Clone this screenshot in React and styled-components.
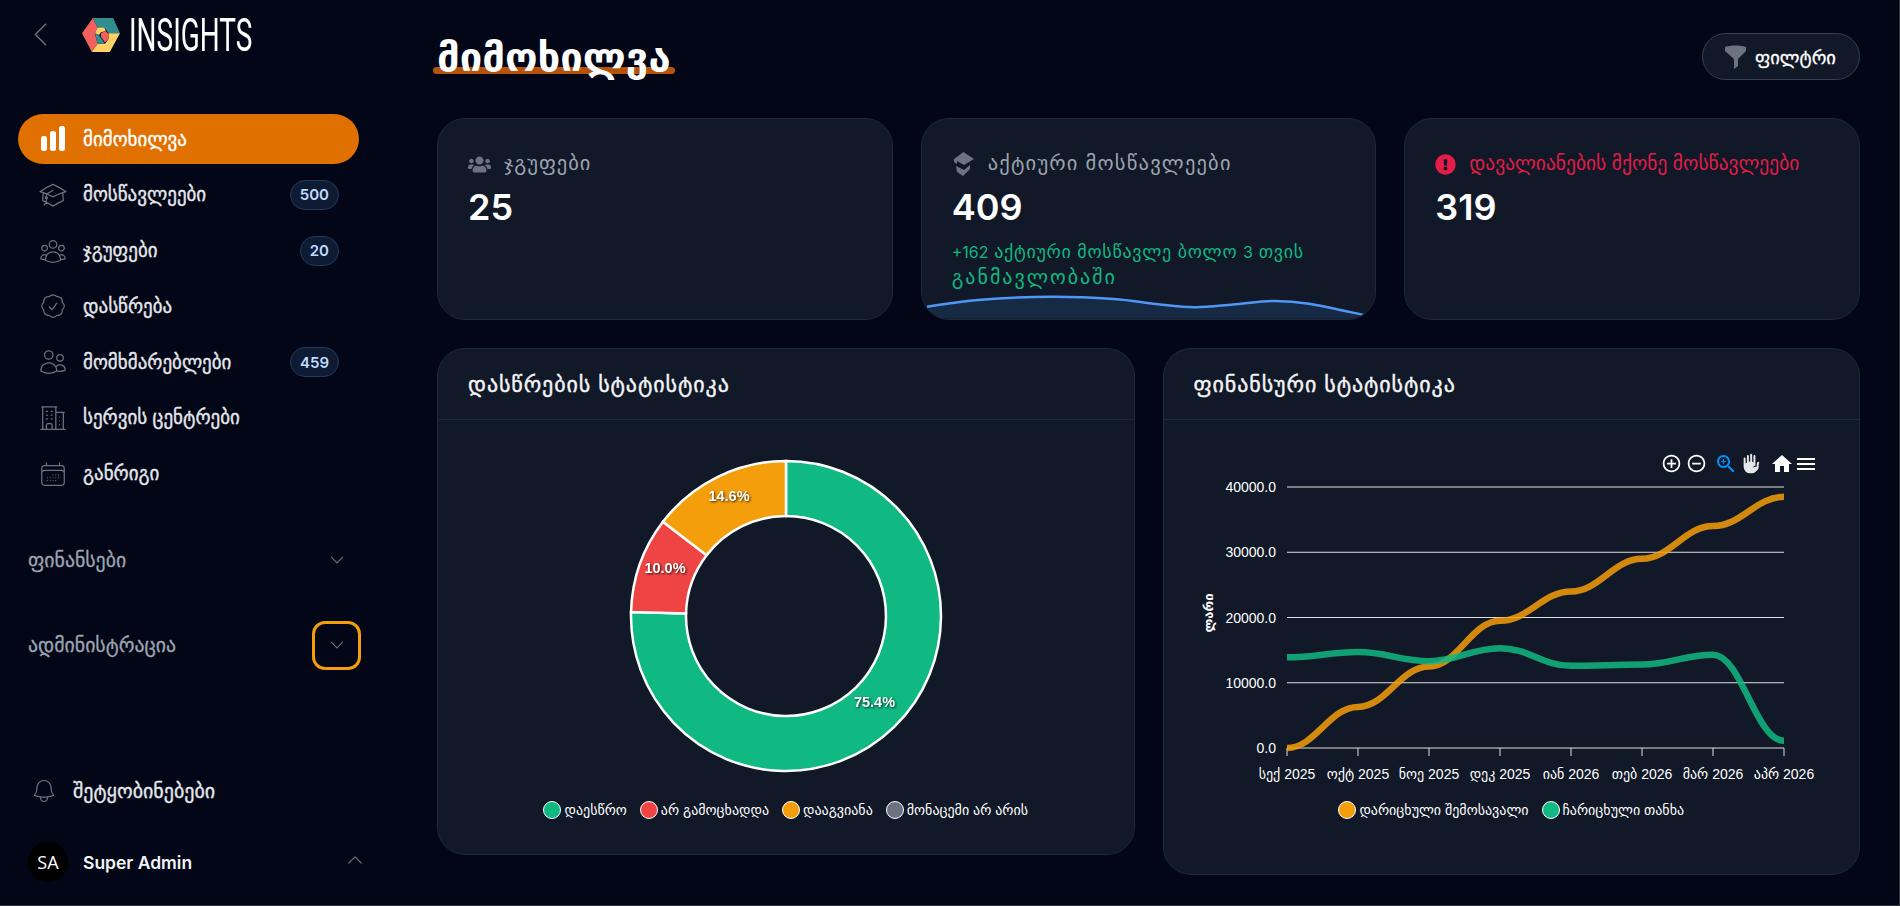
import React from 'react';
import styled, { createGlobalStyle } from 'styled-components';
import {
  HiOutlineAcademicCap, HiOutlineUserGroup, HiOutlineCheckBadge, HiOutlineUsers,
  HiOutlineBuildingOffice2, HiOutlineCalendarDays, HiOutlineBell, HiOutlineChevronDown,
  HiOutlineChevronUp, HiOutlineChevronLeft, HiHandRaised,
} from 'react-icons/hi2';
import { FaUsers, FaExclamationCircle } from 'react-icons/fa';

const UI = `Inter, "DejaVu Sans", sans-serif`;
const ARIAL = `"Liberation Sans", "DejaVu Sans", sans-serif`;

const Global = createGlobalStyle`
  html, body { margin: 0; padding: 0; background: #020617; overflow: hidden; }
  * { box-sizing: border-box; }
`;

const Page = styled.div`
  display: flex; width: 1900px; height: 906px; background: #020617; color: #fff;
  font-family: ${UI}; border-right: 1px solid #30353d; border-bottom: 1px solid #30353d; overflow: hidden;
`;
const Side = styled.aside`
  width: 377px; flex: none; height: 905px; display: flex; flex-direction: column; padding: 17px 16px 23px 18px;
`;
const Brand = styled.div`display: flex; align-items: center; height: 35px; margin-bottom: 62px;`;
const Back = styled.span`display: flex; color: #6b7280; margin: 0 23px 0 6px; font-size: 33px; width: 35px;`;
const Mark = styled.svg`width: 38px; height: 34px; flex: none;`;
const BrandText = styled.span`
  display: inline-block; margin-left: 9px; font-family: Roboto, sans-serif; font-weight: 400; font-size: 47px; line-height: 35px;
  color: #fff; transform: scaleX(0.595); transform-origin: left center; white-space: nowrap;
`;
const Nav = styled.nav`display: flex; flex-direction: column; gap: 5.8px; width: 341px;`;
const Item = styled.a`
  display: flex; align-items: center; height: 50px; padding: 0 20px; border-radius: 25px; gap: 15px;
  font-size: 19px; font-weight: 400; -webkit-text-stroke: .35px; color: ${p => (p.$active ? '#fff' : '#e5e7eb')};
  background: ${p => (p.$active ? '#e07000' : 'transparent')};
  svg { flex: none; color: ${p => (p.$active ? '#fff' : '#6b7280')}; }
`;
const Label = styled.span`flex: 1; white-space: nowrap;`;
const Badge = styled.span`
  height: 30px; padding: 0 9px; border-radius: 15px; display: flex; align-items: center; -webkit-text-stroke: 0;
  background: #0f1b33; border: 1px solid #1e3a5f; color: #bfdbfe; font-size: 15px; font-weight: 600;
`;
const Section = styled.div`
  display: flex; align-items: center; justify-content: space-between; width: 343px; height: 49px;
  padding-left: 10px; margin-top: ${p => p.$top}px; font-size: 19.8px; -webkit-text-stroke: .3px; color: #9ca3af;
`;
const Toggle = styled.span`
  width: 49px; height: 49px; display: flex; align-items: center; justify-content: center; color: #6b7280;
  border-radius: 13px; border: 3px solid ${p => (p.$focus ? '#f59e0b' : 'transparent')}; font-size: 18px;
`;
const Bell = styled.div`
  display: flex; align-items: center; gap: 15px; margin-top: auto; padding-left: 12px; font-size: 20px; -webkit-text-stroke: .35px; color: #e5e7eb;
  svg { color: #6b7280; flex: none; }
`;
const User = styled.div`display: flex; align-items: center; margin-top: 37px; padding-left: 10px; width: 347px;`;
const Avatar = styled.span`
  width: 40px; height: 40px; border-radius: 50%; background: #000; display: flex; align-items: center; justify-content: center;
  font-family: "Open Sans", sans-serif; font-size: 18px; flex: none;
`;
const UserName = styled.span`flex: 1; margin-left: 15px; font-size: 17.5px; font-weight: 600; color: #f3f4f6;`;
const UserCaret = styled.span`display: flex; color: #6b7280; font-size: 20px; margin-top: -4px;`;

const Main = styled.main`flex: 1; padding: 33px 39px 0 60px; min-width: 0;`;
const Head = styled.header`display: flex; align-items: center; justify-content: space-between; height: 47px; margin-bottom: 38px;`;
const Title = styled.h1`
  position: relative; margin: 0 0 0 -4px; padding: 0 4px; font-size: 40px; font-weight: 700; line-height: 47px; color: #fff; z-index: 0;
  &::after { content: ''; position: absolute; z-index: -1; left: 0; right: 0; bottom: 6px; height: 7px; border-radius: 4px; background: #b45309; }
`;
const FilterBtn = styled.button`
  display: flex; align-items: center; gap: 9px; height: 47px; width: 158px; padding: 0 0 0 22px; border-radius: 24px;
  background: #111827; border: 1px solid #374151; color: #fff; font: 400 18.5px ${UI}; -webkit-text-stroke: .3px;
`;
const Stats = styled.section`display: grid; grid-template-columns: repeat(3, 1fr); gap: 28px; margin-bottom: 28px;`;
const Card = styled.div`
  position: relative; background: #111827; border: 1px solid #1f2937; border-radius: 28px; overflow: hidden;
  height: ${p => p.$h}px;
`;
const StatBody = styled.div`position: relative; padding: 32px 30px 0;`;
const StatHead = styled.div`
  display: flex; align-items: center; gap: 13px; height: 26px; white-space: nowrap;
  color: ${p => (p.$danger ? '#e11d48' : '#9ca3af')};
  svg { flex: none; color: ${p => (p.$danger ? '#e11d48' : '#6b7280')}; }
`;
const StatText = styled.span`font-size: ${p => p.$fs}px; letter-spacing: ${p => p.$ls || 0}px; margin-top: -3px;`;
const Value = styled.div`font-size: 36px; font-weight: 600; line-height: 44px; margin-top: 8px; color: #fff;`;
const Note = styled.div`font-size: 18px; line-height: 25px; color: #10b981; margin-top: 10px; letter-spacing: .7px; white-space: nowrap;`;
const NoteNum = styled.span`font-size: 16px; letter-spacing: 0;`;
const NoteWord = styled.span`display: block; font-size: 20px; letter-spacing: 2px;`;
const Spark = styled.svg`position: absolute; left: 0; top: 0; pointer-events: none;`;
const Charts = styled.section`display: grid; grid-template-columns: 1fr 1fr; gap: 28px; align-items: start;`;
const CardHead = styled.div`
  height: 71px; display: flex; align-items: center; padding: 0 30px; font-size: 22px; letter-spacing: .9px; -webkit-text-stroke: .4px; color: #f3f4f6; border-bottom: 1px solid #1f2937;
`;
const DonutBody = styled.div`display: flex; flex-direction: column; align-items: center; padding-top: 36px;`;
const Legend = styled.div`display: flex; justify-content: center; gap: ${p => p.$gap}px; margin-top: ${p => p.$top}px; font: 14px ${ARIAL}; color: #fff;`;
const LegendItem = styled.span`display: flex; align-items: center; gap: 3px; height: 20px; white-space: nowrap;`;
const Dot = styled.i`width: 18px; height: 18px; border-radius: 50%; border: 1px solid #fff; background: ${p => p.$c}; flex: none;`;
const LineBody = styled.div`padding-top: 33px;`;
const Tools = styled.div`display: flex; align-items: center; height: 21px; padding-left: 497px; color: #fff;`;
const Tool = styled.svg`width: ${p => p.$s || 21}px; height: ${p => p.$s || 21}px; flex: none; margin-right: ${p => p.$m}px; fill: ${p => p.$c || '#fff'};`;
const Hand = styled.span`display: flex; font-size: 21px; color: #e5e7eb; margin-right: 8px;`;
const Plot = styled.svg`display: block;`;

function smooth(pts) {
  let d = `M${pts[0][0]} ${pts[0][1]}`;
  for (let i = 0; i < pts.length - 1; i++) {
    const p0 = pts[i - 1] || pts[i], p1 = pts[i], p2 = pts[i + 1], p3 = pts[i + 2] || p2;
    d += ` C${p1[0] + (p2[0] - p0[0]) / 6} ${p1[1] + (p2[1] - p0[1]) / 6} ${p2[0] - (p3[0] - p1[0]) / 6} ${p2[1] - (p3[1] - p1[1]) / 6} ${p2[0]} ${p2[1]}`;
  }
  return d;
}
function flat(pts) {
  let d = `M${pts[0][0]} ${pts[0][1]}`;
  for (let i = 0; i < pts.length - 1; i++) {
    const [a, b] = pts[i], [c, e] = pts[i + 1], m = (c - a) * 0.4;
    d += ` C${a + m} ${b} ${c - m} ${e} ${c} ${e}`;
  }
  return d;
}
const arc = (cx, cy, R, r, a0, a1) => {
  const p = (rad, a) => { const t = (a - 90) * Math.PI / 180; return `${(cx + rad * Math.cos(t)).toFixed(2)} ${(cy + rad * Math.sin(t)).toFixed(2)}`; };
  const large = a1 - a0 > 180 ? 1 : 0;
  return `M${p(R, a0)} A${R} ${R} 0 ${large} 1 ${p(R, a1)} L${p(r, a1)} A${r} ${r} 0 ${large} 0 ${p(r, a0)} Z`;
};

const sparkPts = [[926, 305.7], [977, 299], [1050, 295.7], [1113, 298], [1155, 303], [1194, 306.3], [1232, 303.5], [1272, 300], [1308, 302.7], [1363, 314]];
const X0 = 1287, DX = 71, Y0 = 748, YK = 261 / 40000;
const series = v => v.map((n, i) => [X0 + i * DX, +(Y0 - n * YK).toFixed(1)]);
const income = series([0, 6300, 12500, 19500, 24000, 29000, 34000, 38500]);
const paid = series([13900, 14700, 13300, 15300, 12600, 12800, 14300, 1100]);
const months = ['სექ 2025', 'ოქტ 2025', 'ნოე 2025', 'დეკ 2025', 'იან 2026', 'თებ 2026', 'მარ 2026', 'აპრ 2026'];
const nav = [
  ['მოსწავლეები', HiOutlineAcademicCap, 500],
  ['ჯგუფები', HiOutlineUserGroup, 20],
  ['დასწრება', HiOutlineCheckBadge],
  ['მომხმარებლები', HiOutlineUsers, 459],
  ['სერვის ცენტრები', HiOutlineBuildingOffice2],
  ['განრიგი', HiOutlineCalendarDays],
];

const Logo = () => (
  <Mark viewBox="0 0 112 100">
    <polygon fill="#f25f5c" points="0,45 32,0 46,28 38,45 46,76 29,100" />
    <polygon fill="#2f8f8f" points="32,0 92,0 112,45 78,45 66,28 46,28" />
    <polygon fill="#ffd166" points="112,45 82,100 29,100 46,76 68,76 78,62 78,45" />
    <polygon fill="#ffd166" points="46,28 66,28 70,38 56,42 50,50 38,45" />
    <polygon fill="#2f8f8f" points="38,45 50,50 58,62 68,76 46,76" />
    <polygon fill="#f25f5c" points="70,38 78,47 78,62 68,72 56,56 56,44" />
  </Mark>
);
const Bars = () => (
  <svg width="30" height="30" viewBox="0 0 30 30" fill="#fff">
    <rect x="3" y="12" width="6" height="15" rx="2.5" />
    <rect x="12" y="7" width="6" height="20" rx="2.5" />
    <rect x="21" y="2" width="6" height="25" rx="2.5" />
  </svg>
);
const CapCheck = () => (
  <svg width="23" height="26" viewBox="0 0 23 26" fill="#6b7280">
    <path d="M11.5 1 L22 8 L12 14 L5 10 V13 L2 11 V8 Z" />
    <path d="M4 15 L12 19 L18 14 V18 L11 25 L5 21 Z" />
  </svg>
);
const Funnel = () => (
  <svg width="21" height="24" viewBox="0 0 21 24" fill="#6b7280">
    <path d="M0 2 C6 0 15 0 21 2 V6 L13 14 V21 L9 24 V14 L0 6 Z" />
  </svg>
);

export default function App() {
  return (
    <Page>
      <Global />
      <Side>
        <Brand>
          <Back><HiOutlineChevronLeft strokeWidth={1.1} /></Back>
          <Logo />
          <BrandText>INSIGHTS</BrandText>
        </Brand>
        <Nav>
          <Item $active><Bars /><Label>მიმოხილვა</Label></Item>
          {nav.map(([t, Ic, b]) => (
            <Item key={t}><Ic size={30} strokeWidth={1} /><Label>{t}</Label>{b && <Badge>{b}</Badge>}</Item>
          ))}
        </Nav>
        <Section $top={37}>ფინანსები<Toggle><HiOutlineChevronDown /></Toggle></Section>
        <Section $top={36}>ადმინისტრაცია<Toggle $focus><HiOutlineChevronDown /></Toggle></Section>
        <Bell><HiOutlineBell size={28} strokeWidth={1} />შეტყობინებები</Bell>
        <User>
          <Avatar>SA</Avatar>
          <UserName>Super Admin</UserName>
          <UserCaret><HiOutlineChevronUp /></UserCaret>
        </User>
      </Side>
      <Main>
        <Head>
          <Title>მიმოხილვა</Title>
          <FilterBtn><Funnel />ფილტრი</FilterBtn>
        </Head>
        <Stats>
          <Card $h={202}>
            <StatBody>
              <StatHead><FaUsers size={23} /><StatText $fs={20.5} $ls={1}>ჯგუფები</StatText></StatHead>
              <Value>25</Value>
            </StatBody>
          </Card>
          <Card $h={202}>
            <Spark width="456" height="202" viewBox="921 118 456 202">
              <path fill="#172a45" d={`${smooth(sparkPts)} L1363 317.5 L926 317.5 Z`} />
              <path fill="none" stroke="#4f97f5" strokeWidth="2.5" d={smooth(sparkPts)} />
            </Spark>
            <StatBody>
              <StatHead><CapCheck /><StatText $fs={20.5} $ls={1.2}>აქტიური მოსწავლეები</StatText></StatHead>
              <Value>409</Value>
              <Note>
                <NoteNum>+162</NoteNum> აქტიური მოსწავლე ბოლო <NoteNum>3</NoteNum> თვის
                <NoteWord>განმავლობაში</NoteWord>
              </Note>
            </StatBody>
          </Card>
          <Card $h={202}>
            <StatBody>
              <StatHead $danger><FaExclamationCircle size={21} /><StatText $fs={19.5}>დავალიანების მქონე მოსწავლეები</StatText></StatHead>
              <Value>319</Value>
            </StatBody>
          </Card>
        </Stats>
        <Charts>
          <Card $h={507}>
            <CardHead>დასწრების სტატისტიკა</CardHead>
            <DonutBody>
              <svg width="320" height="320" viewBox="626 457 320 320">
                <g stroke="#fff" strokeWidth="2.5">
                  <path fill="#10b981" d={arc(786, 617, 155, 100, 0, 271.44)} />
                  <path fill="#ef4444" d={arc(786, 617, 155, 100, 271.44, 307.44)} />
                  <path fill="#f59e0b" d={arc(786, 617, 155, 100, 307.44, 360)} />
                </g>
                <g fill="#fff" fontFamily={ARIAL} fontWeight="700" fontSize="14.5" textAnchor="middle" style={{ filter: 'drop-shadow(1px 1px 1px rgba(0,0,0,.75))' }}>
                  <text x="874.5" y="708">75.4%</text>
                  <text x="665" y="574">10.0%</text>
                  <text x="729" y="502">14.6%</text>
                </g>
              </svg>
              <Legend $gap={13} $top={24}>
                <LegendItem><Dot $c="#10b981" />დაესწრო</LegendItem>
                <LegendItem><Dot $c="#ef4444" />არ გამოცხადდა</LegendItem>
                <LegendItem><Dot $c="#f59e0b" />დააგვიანა</LegendItem>
                <LegendItem><Dot $c="#6b7280" />მონაცემი არ არის</LegendItem>
              </Legend>
            </DonutBody>
          </Card>
          <Card $h={527}>
            <CardHead>ფინანსური სტატისტიკა</CardHead>
            <LineBody>
              <Tools>
                <Tool viewBox="0 0 24 24" $m={4}><path d="M13 7h-2v4H7v2h4v4h2v-4h4v-2h-4V7zm-1-5C6.49 2 2 6.49 2 12s4.49 10 10 10 10-4.49 10-10S17.51 2 12 2zm0 18c-4.41 0-8-3.59-8-8s3.59-8 8-8 8 3.59 8 8-3.59 8-8 8z" /></Tool>
                <Tool viewBox="0 0 24 24" $m={7}><path d="M7 11v2h10v-2H7zm5-9C6.48 2 2 6.48 2 12s4.48 10 10 10 10-4.48 10-10S17.52 2 12 2zm0 18c-4.41 0-8-3.59-8-8s3.59-8 8-8 8 3.59 8 8-3.59 8-8 8z" /></Tool>
                <Tool viewBox="0 0 24 24" $m={3} $s={24} $c="#008ffb"><path d="M15.5 14h-.79l-.28-.27C15.41 12.59 16 11.11 16 9.5 16 5.91 13.09 3 9.5 3S3 5.91 3 9.5 5.91 16 9.5 16c1.61 0 3.09-.59 4.23-1.57l.27.28v.79l5 4.99L20.49 19l-4.99-5zm-6 0C7.01 14 5 11.99 5 9.5S7.01 5 9.5 5 14 7.01 14 9.5 11.99 14 9.5 14z" /><path d="M12 10h-2v2H9v-2H7V9h2V7h1v2h2v1z" /></Tool>
                <Hand><HiHandRaised /></Hand>
                <Tool viewBox="0 0 24 24" $m={0} $s={24}><path d="M10 20v-6h4v6h5v-8h3L12 3 2 12h3v8z" /></Tool>
                <Tool viewBox="0 0 24 24" $m={0} $s={24}><path d="M3 18h18v-2H3v2zm0-5h18v-2H3v2zm0-7v2h18V6H3z" /></Tool>
              </Tools>
              <Plot width="695" height="316" viewBox="1164 474 695 316">
                {[0, 1, 2, 3, 4].map(i => (
                  <g key={i}>
                    <line x1={X0} x2={X0 + 7 * DX} y1={Y0 - i * 65.25} y2={Y0 - i * 65.25} stroke="#e0e0e0" strokeWidth="1.2" />
                    <text x="1276" y={Y0 - i * 65.25 + 5} textAnchor="end" fill="#fff" fontFamily={ARIAL} fontSize="14">{(i * 10000).toFixed(1)}</text>
                  </g>
                ))}
                {months.map((m, i) => (
                  <g key={m}>
                    <line x1={X0 + i * DX} x2={X0 + i * DX} y1={Y0} y2={Y0 + 8} stroke="#e0e0e0" />
                    <text x={X0 + i * DX} y="779" textAnchor="middle" fill="#fff" fontFamily={ARIAL} fontSize="14">{m}</text>
                  </g>
                ))}
                <text transform="translate(1213 613) rotate(-90)" textAnchor="middle" fill="#fff" fontFamily={ARIAL} fontWeight="700" fontSize="13">ლარი</text>
                <path d={flat(income)} fill="none" stroke="#f59e0b" strokeOpacity=".85" strokeWidth="6.5" />
                <path d={flat(paid)} fill="none" stroke="#10b981" strokeOpacity=".85" strokeWidth="6.5" />
              </Plot>
              <Legend $gap={13} $top={10}>
                <LegendItem><Dot $c="#f59e0b" />დარიცხული შემოსავალი</LegendItem>
                <LegendItem><Dot $c="#10b981" />ჩარიცხული თანხა</LegendItem>
              </Legend>
            </LineBody>
          </Card>
        </Charts>
      </Main>
    </Page>
  );
}
